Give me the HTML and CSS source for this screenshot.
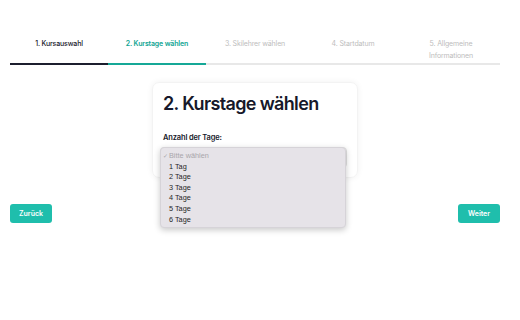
FILE: index.html
```html
<!DOCTYPE html>
<html lang="de">
<head>
    <meta charset="UTF-8">
    <title>Kursbuchung</title>
    <link rel="stylesheet" href="styles.css">
</head>
<body>
<div class="wizard">
    <ul class="steps">
        <li class="step done">1. Kursauswahl</li>
        <li class="step active">2. Kurstage wählen</li>
        <li class="step">3. Skilehrer wählen</li>
        <li class="step">4. Startdatum</li>
        <li class="step">5. Allgemeine<br>Informationen</li>
    </ul>

    <div class="card">
        <h1>2. Kurstage wählen</h1>
        <label class="field-label">Anzahl der Tage:</label>
        <div class="select-wrap">
            <div class="select-box"><span class="arrow"></span></div>
            <ul class="dropdown">
                <li class="placeholder"><span class="check">✓</span>Bitte wählen</li>
                <li>1 Tag</li>
                <li>2 Tage</li>
                <li>3 Tage</li>
                <li>4 Tage</li>
                <li>5 Tage</li>
                <li>6 Tage</li>
            </ul>
        </div>
    </div>

    <div class="button-row">
        <button class="btn">Zurück</button>
        <button class="btn">Weiter</button>
    </div>
</div>
</body>
</html>
```

FILE: styles.css
```css
html, body {
    min-height: 100vh;
}

body {
    margin: 0;
    background: #fff;
    font-family: Inter, "Noto Sans", sans-serif;
    color: #16182a;
}

.wizard {
    padding: 0 20px 0 10px;
}

.steps {
    display: grid;
    grid-template-columns: repeat(5, 1fr);
    margin: 0;
    padding: 38px 0 0;
    list-style: none;
}

.step {
    text-align: center;
    font-size: 7px;
    line-height: 12px;
    letter-spacing: -0.15px;
    color: #bdbdbd;
    padding-bottom: 1px;
    border-bottom: 2px solid #e8e8e8;
}

.step.done {
    color: #16182a;
    font-weight: 500;
    border-bottom-color: #1c1e2e;
}

.step.active {
    color: #12a594;
    font-weight: 600;
    border-bottom-color: #15a897;
}

.card {
    width: 184px;
    margin: 17px auto 0;
    padding: 9px 10px 9px;
    border-radius: 7px;
    box-shadow: 0 0 6px rgba(0, 0, 0, 0.06);
    border: 1px solid #f3f3f3;
}

h1 {
    margin: 0;
    font-size: 18px;
    line-height: 23px;
    font-weight: 600;
    letter-spacing: -0.65px;
}

.field-label {
    display: block;
    margin-top: 18px;
    font-size: 7.5px;
    line-height: 10px;
    font-weight: 600;
    letter-spacing: -0.15px;
}

.select-wrap {
    position: relative;
    margin: 4px 0 0 -3px;
}

.select-box {
    height: 19px;
    border-radius: 4px;
    border: 1px solid #e2e2e2;
    background: #f4f4f4;
}

.arrow {
    position: absolute;
    right: 1px;
    top: 6px;
    width: 2px;
    height: 3px;
    background: #333;
}

.dropdown {
    position: absolute;
    z-index: 2;
    left: 0;
    top: 0;
    width: 184px;
    margin: 0;
    padding: 3px 0 2px;
    list-style: none;
    background: #e6e3e8;
    border: 1px solid #d6d3d8;
    border-radius: 4px;
    box-shadow: 0 2px 6px rgba(0, 0, 0, 0.22);
    font-family: "Liberation Sans", Arial, sans-serif;
    font-size: 7.3px;
}

.dropdown li {
    height: 10.6px;
    line-height: 10.6px;
    padding-left: 8px;
    color: #262626;
}

.dropdown .placeholder {
    color: #a9a6ab;
    padding-left: 2px;
}

.check {
    display: inline-block;
    width: 6px;
    font-size: 6px;
}

.button-row {
    display: flex;
    justify-content: space-between;
    margin-top: 26px;
}

.btn {
    width: 42px;
    height: 19px;
    border: none;
    border-radius: 3px;
    background: #1fbeac;
    color: #fff;
    font-family: Inter, sans-serif;
    font-size: 7px;
    font-weight: 600;
}
```
